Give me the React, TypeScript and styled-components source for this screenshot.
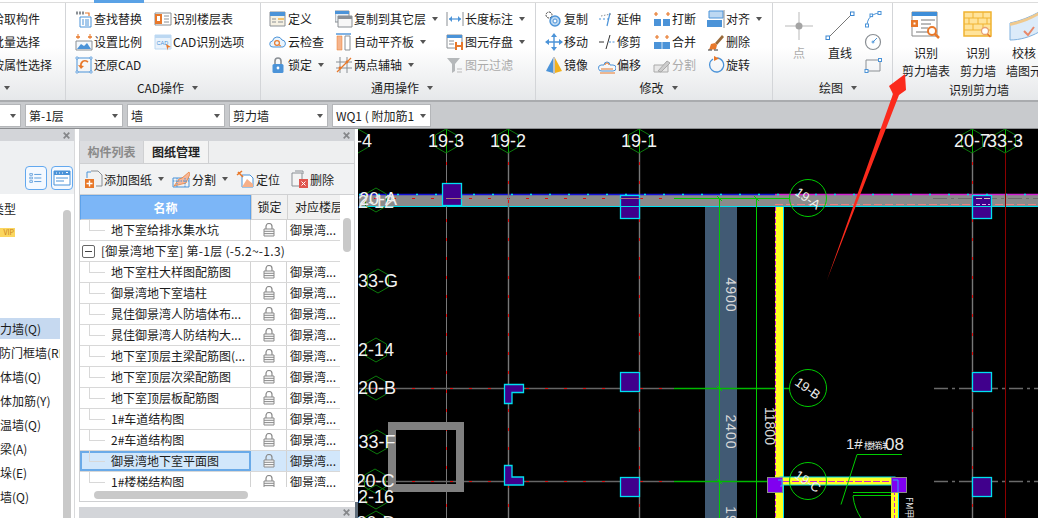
import React from "react";
import styled, { createGlobalStyle } from "styled-components";

const Global = createGlobalStyle`
  html, body { margin: 0; padding: 0; background: #fff; }
  body { font-family: "Noto Sans CJK SC", "Liberation Sans", sans-serif; font-size: 12px; color: #1c1c1c; }
  * { box-sizing: border-box; }
`;

const Page = styled.div`
  position: relative; width: 1038px; height: 518px; overflow: hidden;
  display: flex; flex-direction: column; background: #fff;
`;
const TopStrip = styled.div`height: 3px; flex: none; background: #fff; border-bottom: 1px solid #dcdcdc; display: flex;`;
const ActiveTab = styled.div`margin-left: 94px; width: 50px; height: 3px; background: #5aa2e6;`;
const Ribbon = styled.div`
  height: 99px; flex: none; display: flex; overflow: hidden;
  background: linear-gradient(#ffffff 45%, #e6e8ea); border-bottom: 2px solid #a9abae;
`;
const Group = styled.div<{ $w: number; $pad?: number; $last?: boolean }>`
  width: ${p => p.$w}px; flex: none; padding-left: ${p => p.$pad ?? 0}px; display: flex; flex-direction: column;
  border-right: ${p => (p.$last ? "none" : "1px solid #d3d5d8")};
`;
const Body = styled.div<{ $h?: number }>`display: flex; height: ${p => p.$h ?? 76}px; padding-top: 4px; flex: none;`;
const Col = styled.div<{ $w: number; $ml?: number }>`
  width: ${p => p.$w}px; margin-left: ${p => p.$ml ?? 0}px; flex: none; display: flex; flex-direction: column;
`;
const Tool = styled.div<{ $off?: boolean }>`
  height: 23px; flex: none; display: flex; align-items: center; white-space: nowrap; color: ${p => (p.$off ? "#ababab" : "#1c1c1c")};
  line-height: 23px;
`;
const Slot = styled.span`width: 19px; flex: none; display: flex;`;
const Drop = styled.i<{ $ml?: number }>`
  display: inline-block; width: 0; height: 0; flex: none; margin-left: ${p => p.$ml ?? 6}px;
  border-left: 3px solid transparent; border-right: 3px solid transparent; border-top: 4px solid #555;
`;
const Caption = styled.div<{ $start?: boolean }>`
  height: 18px; flex: none; display: flex; align-items: center; justify-content: ${p => (p.$start ? "flex-start" : "center")};
  padding-left: ${p => (p.$start ? 4 : 0)}px; color: #1c1c1c; line-height: 18px; white-space: nowrap;
`;
const ClippedCol = styled(Col)`margin-left: -8px;`;
const BigCol = styled.div<{ $w: number; $ml?: number }>`
  width: ${p => p.$w}px; margin-left: ${p => p.$ml ?? 0}px; flex: none; display: flex; flex-direction: column; align-items: center;
`;
const BigIcon = styled.div`height: 37px; flex: none; width: 100%; display: flex; justify-content: center; align-items: flex-start; padding-top: 4px;`;
const BigLabel = styled.div<{ $off?: boolean }>`
  line-height: 18px; height: 18px; flex: none; white-space: nowrap; text-align: center; color: ${p => (p.$off ? "#ababab" : "#1c1c1c")};
`;

const Bar = styled.div`height: 27px; flex: none; background: #c8cacd; display: flex; gap: 4px; padding-top: 2px; border-bottom: 1px solid #8b8d90;`;
const Select = styled.div<{ $w: number; $ml?: number }>`
  width: ${p => p.$w}px; margin-left: ${p => p.$ml ?? 0}px; height: 23px; background: #fff; border: 1px solid #b4b6b9;
  display: flex; align-items: center; justify-content: space-between; padding: 0 4px 0 3px; white-space: nowrap; flex: none;
`;

const Main = styled.div`flex: 1; min-height: 0; display: flex; background: #fff;`;
const LeftPanel = styled.div`width: 75px; flex: none; display: flex; flex-direction: column; border-right: 1px solid #d8d9db;`;
const PanelHead = styled.div`
  height: 12px; flex: none; background: #d3d5d9; display: flex; align-items: center; justify-content: flex-end; padding-right: 4px;
`;
const Close = styled.svg`width: 7px; height: 7px; display: block;`;
const LeftTools = styled.div`
  height: 53px; flex: none; background: #eef0f2; display: flex; justify-content: flex-end; align-items: flex-end; gap: 4px; padding: 0 1px 4px 0;
`;
const IconBtn = styled.div`
  width: 22px; height: 24px; border: 1px solid #62a8ef; border-radius: 4px; background: #f4f9ff; display: flex; align-items: center; justify-content: center;
`;
const LeftBody = styled.div`flex: 1; min-height: 0; display: flex; overflow: hidden;`;
const ListCol = styled.div`width: 60px; flex: none; overflow: hidden; padding-top: 6px;`;
const TypeTitle = styled.div`margin-left: -32px; height: 18px; line-height: 18px; white-space: nowrap; font-size: 12px;`;
const Chip = styled.div`
  width: 15px; height: 9px; margin: 10px 0 81px; background: #fbd65f; color: #c9821c; font-size: 7px; line-height: 9px; text-align: right; padding-right: 1px; overflow: hidden;
`;
const ListRow = styled.div<{ $on?: boolean; $cut: number }>`
  height: 21px; margin-bottom: 3px; line-height: 21px; white-space: nowrap; overflow: hidden;
  background: ${p => (p.$on ? "#c6d9f0" : "transparent")};
  & > span { display: block; margin-left: -${p => p.$cut}px; }
`;
const VScroll = styled.div`width: 8px; margin: 16px 0 0 3px; flex: none; background: #c9c9c9; border-radius: 4px 4px 0 0;`;

const Column = styled.div`width: 3px; flex: none; display: flex; flex-direction: column; justify-content: flex-end;`;
const ColumnFoot = styled.div`height: 16px; background: #5d6c7a;`;
const Gutter = styled.div`width: 4px; flex: none;`;

const CenterCol = styled.div`width: 276px; flex: none; display: flex; flex-direction: column;`;
const CenterPanel = styled.div`height: 373px; flex: none; border: 1px solid #cfd0d2; border-top: none; display: flex; flex-direction: column;`;
const CenterHead = styled(PanelHead)`margin: 0 -1px; padding-right: 5px;`;
const Tabs = styled.div`height: 23px; flex: none; display: flex; background: #eeeff0; border-bottom: 1px solid #cfd0d2;`;
const Tab = styled.div<{ $on?: boolean }>`
  width: ${p => (p.$on ? 65 : 64)}px; font-weight: 700; text-align: center; line-height: 22px;
  color: ${p => (p.$on ? "#222" : "#8a8a8a")}; background: ${p => (p.$on ? "#f3f3f3" : "#dcdde0")};
  border-right: 1px solid #cfd0d2;
`;
const DocTools = styled.div`
  height: 31px; flex: none; background: #f1f2f3; border-bottom: 1px solid #cfd0d2; display: flex; align-items: center; padding-left: 5px;
`;
const DocTool = styled.div<{ $ml?: number; $slot: number }>`
  display: flex; align-items: center; margin-left: ${p => p.$ml ?? 0}px; white-space: nowrap;
  & > svg { margin-right: ${p => p.$slot}px; }
`;
const TableArea = styled.div`height: 292px; flex: none; display: flex;`;
const Table = styled.div`width: 260px; flex: none; overflow: hidden;`;
const HeadRow = styled.div`display: grid; grid-template-columns: 171px 36px 53px; height: 25px;`;
const HeadCell = styled.div<{ $main?: boolean; $pad?: number }>`
  line-height: 24px; text-align: ${p => (p.$pad ? "left" : "center")}; padding-left: ${p => p.$pad ?? 0}px; white-space: nowrap; overflow: hidden;
  background: ${p => (p.$main ? "#7cb6f7" : "#f1f1f1")}; color: ${p => (p.$main ? "#fff" : "#222")};
  font-weight: ${p => (p.$main ? 700 : 400)}; border: ${p => (p.$main ? "1px solid #5ea2ea" : "none")};
  border-left: ${p => (p.$main ? "1px solid #5ea2ea" : "1px solid #d2d2d2")}; border-bottom: 1px solid #d2d2d2;
`;
const Row = styled.div<{ $sel?: boolean }>`
  display: grid; grid-template-columns: 171px 36px 53px; height: 21px; border-bottom: 1px solid #d8d8d8;
  background: ${p => (p.$sel ? "#d2e7fb" : "#fff")};
`;
const NameCell = styled.div<{ $sel?: boolean }>`
  position: relative; padding-left: 31px; line-height: 20px; white-space: nowrap; overflow: hidden;
  border-right: 1px solid #d2d2d2; outline: ${p => (p.$sel ? "2px solid #6aaae8" : "none")}; outline-offset: -2px;
`;
const TreeLine = styled.i`
  position: absolute; left: 9px; top: 0; width: 16px; height: 11px; border-left: 1px solid #d8d8d8; border-bottom: 1px solid #d8d8d8;
`;
const LockCell = styled.div`display: flex; align-items: center; justify-content: center; border-right: 1px solid #d2d2d2;`;
const FloorCell = styled.div`padding-left: 3px; line-height: 20px; white-space: nowrap; overflow: hidden;`;
const GroupRow = styled.div`height: 21px; display: flex; align-items: center; padding-left: 2px; border-bottom: 1px solid #d8d8d8; white-space: nowrap; line-height: 20px; letter-spacing: .3px;`;
const Minus = styled.div`
  width: 13px; height: 13px; border: 1px solid #666; border-radius: 2px; margin-right: 6px; display: flex; align-items: center; justify-content: center;
  &::after { content: ""; width: 7px; height: 1px; background: #444; }
`;
const ScrollCol = styled.div`width: 14px; flex: none; padding: 23px 0 0 3px;`;
const VThumb = styled.div`width: 8px; height: 34px; background: #c9c9c9; border-radius: 4px;`;
const HScroll = styled.div`height: 15px; flex: none; padding: 4px 0 0 14px;`;
const HThumb = styled.div`width: 154px; height: 8px; background: #c9c9c9; border-radius: 4px;`;
const SecondHead = styled.div`
  margin-top: 5px; flex: 1; background: #d3d5d9; display: flex; align-items: center; justify-content: flex-end; padding-right: 5px;
`;

const Canvas = styled.svg`width: 680px; height: 389px; flex: none; display: block; background: #000;`;
const ArrowOverlay = styled.svg`position: absolute; left: 0; top: 0; width: 1038px; height: 518px; pointer-events: none;`;

/* ---------- icons ---------- */
const I: React.FC<{ s?: number; children: React.ReactNode }> = ({ s = 18, children }) => (
  <svg width={s} height={s} viewBox="0 0 18 18" fill="none" style={{ display: "block", flex: "none" }}>{children}</svg>
);
const B = "#4b93d8", O = "#e8782a", G = "#8a8f94", LB = "#bcd8f2";

const icons: Record<string, React.ReactNode> = {
  find: <I><path d="M1 3h8" stroke={G} strokeWidth="3" strokeDasharray="2 1" /><path d="M10 3h4v3" stroke={O} strokeWidth="1.2" /><path d="M5 7h11v10H5z" fill="#fff" stroke={B} /><path d="M7 10h2M7 12h2M7 14h2M11 9v7M13 9v7" stroke={B} /></I>,
  scale: <I><path d="M1 4h4M13 4h4" stroke={O} strokeWidth="1.4" /><path d="M3 1v5M15 1v5" stroke={O} /><path d="M1 8h16v9H1z" fill="#f4f8fc" stroke={G} /><path d="M2 16l4-5 3 2 3-3 4 6z" fill={B} /></I>,
  restore: <I><path d="M2 2h14v14H2z" stroke={B} /><path d="M1 1h2v2H1zM15 1h2v2h-2zM1 15h2v2H1zM15 15h2v2h-2z" fill="#fff" stroke={B} strokeWidth=".7" /><path d="M13 6c-4-3-8 0-7 5" stroke={O} strokeWidth="1.6" /><path d="M3 9l3 4 3-3z" fill={O} /></I>,
  layer: <I><path d="M1 3h16v12H1z" fill="#fff" stroke={G} /><path d="M1 4h7v10H1z" fill={O} /><path d="M3 6h3v5H3z" fill="#fff" /><path d="M10 6h5M10 9h5M10 12h5" stroke={G} /></I>,
  cad: <I><path d="M1 2h16v14H1z" fill="#e9f2fb" stroke={LB} /><path d="M1 2h16v3H1z" fill={LB} /><text x="2.5" y="12" fontSize="5.5" fill={B} fontFamily="Liberation Sans">CAD</text><path d="M12 11l5 3-3 .5-.5 3z" fill={O} /></I>,
  define: <I><path d="M1 2h15v14H1z" fill="#f6f1e2" stroke={G} /><path d="M1 2h15v4H1z" fill={B} /><path d="M9 8h6v2H9z" fill="#f5c26b" /><path d="M3 9h4M3 12h4M9 12h5" stroke={G} /></I>,
  cloud: <I><path d="M4 14a3 3 0 0 1-.5-6 5 5 0 0 1 9.5-1 3.6 3.6 0 0 1 1 7z" fill="#eaf4fc" stroke={B} /><circle cx="8" cy="10" r="2.4" stroke={O} strokeWidth="1.2" /><path d="M10 12l2 1" stroke={O} /></I>,
  lock: <I><path d="M6 8V5a3 3 0 0 1 6 0v3" stroke={G} strokeWidth="1.6" /><rect x="3.5" y="8" width="11" height="9" rx="1.5" fill={B} /><circle cx="9" cy="12" r="1.4" fill="#fff" /></I>,
  copyLayer: <I><path d="M0 1h14v11H0z" fill="#e8edf2" stroke={G} /><path d="M0 1h14v3H0z" fill={B} /><path d="M3 6h14v11H3z" fill="#f7f7f7" stroke={G} /><path d="M3 6h14v3H3z" fill="#8b9096" /></I>,
  autoAlign: <I><path d="M1 1h15" stroke={B} strokeWidth="1.4" /><path d="M2 3h5v14H2z" fill="#f5b48c" stroke={O} strokeWidth=".5" /><path d="M10 3h5v14h-5z" fill="#fff" stroke={G} /></I>,
  twoPoint: <I><path d="M5 1v16M12 1v16M1 6h16M1 12h16" stroke={G} /><path d="M2 16L16 2" stroke={O} strokeWidth="1.2" /><circle cx="5" cy="12" r="1.4" fill={O} /><circle cx="12" cy="6" r="1.4" fill={O} /></I>,
  dim: <I><path d="M1 2v14M17 2v14" stroke={G} /><path d="M3 9h12" stroke={B} strokeWidth="1.2" /><path d="M3 9l3-3v6zM15 9l-3-3v6z" fill={B} /></I>,
  save: <I><path d="M1 2h15v13H1z" fill="#fff" stroke={G} /><path d="M1 2h15v3H1z" fill={B} /><path d="M3 8h5M3 11h5" stroke={G} /><path d="M9 9h8v8H9z" fill={O} /><path d="M11 9h4v3h-4zM11 14h4v3h-4z" fill="#fff" /></I>,
  filter: <I><path d="M1 2h13L9 8v7l-3 2V8z" fill="#b5b8ba" /><path d="M11 13h5M11 16h5" stroke="#bbb" /></I>,
  copy: <I><rect x="1" y="2" width="6" height="6" rx="3" stroke="#444" strokeDasharray="2 1" /><circle cx="10" cy="11" r="5" fill={LB} stroke={B} strokeWidth="1.4" /><circle cx="10" cy="11" r="2" fill="#fff" stroke={B} /></I>,
  move: <I><path d="M9 3v12M3 9h12" stroke={B} strokeWidth="1.4" /><path d="M9 0l3 4H6zM9 18l3-4H6zM0 9l4-3v6zM18 9l-4-3v6z" fill={B} /></I>,
  mirror: <I><path d="M8 2v15L1 15z" fill={B} /><path d="M9 1v17" stroke={G} /><path d="M10 2v15l7-2z" fill="#f2b11d" /></I>,
  extend: <I><path d="M1 9h2M5 9h2M9 9h2" stroke={B} /><path d="M12 3L9 16" stroke={B} strokeWidth="1.2" /><path d="M3 6l10-2" stroke={G} strokeDasharray="1.5 1.5" /></I>,
  trim: <I><path d="M1 9h5" stroke="#333" /><path d="M8 16l4-14" stroke="#333" /><path d="M11 9h6" stroke={B} strokeDasharray="2 1.5" /></I>,
  offset: <I><path d="M4 15a3 3 0 0 1-1-6h3a3 3 0 0 1 6 0h3a3 3 0 0 1 0 6z" stroke={B} /><path d="M2 17h15M3 13h12" stroke={O} /><path d="M7 9a2 2 0 0 1 4 0" stroke={O} /></I>,
  brk: <I><path d="M1 4h4M3 2v4M13 4h4M15 2v4" stroke={O} strokeWidth="1.2" /><path d="M1 9h7v7H1zM10 9h7v7h-7z" fill={B} /></I>,
  merge: <I><path d="M2 4h4M4 2v4M12 4h4M14 2v4" stroke={O} strokeWidth="1.2" /><path d="M1 9h16v7H1z" fill={B} /><path d="M9 9v7" stroke="#cfe2f4" /></I>,
  split: <I><path d="M1 9h14v7H1z" fill="#e8e8e8" stroke="#aaa" /><path d="M5 15l9-10 3 2-9 9z" fill="#ccc" stroke="#aaa" /></I>,
  align: <I><path d="M2 1h14v7H2z" fill={LB} stroke={B} /><path d="M0 10h15v7H0z" fill={B} /><path d="M17 0v18" stroke={G} /></I>,
  del: <I><path d="M8 10L15 2l2 2-7 8z" fill="#9a6a3a" /><path d="M4 11l4-1 2 2-1 4c-3 1-6 0-7 1z" fill={O} /><path d="M1 17h4M7 17h4" stroke="#333" /></I>,
  rotate: <I><path d="M6 3a7 7 0 1 0 4-1" stroke={B} strokeWidth="1.3" /><path d="M7 0l5 2.5L7 5z" fill={O} /></I>,
  arc: <I s={18}><path d="M3 16c0-7 4-12 12-13" stroke={B} /><rect x="1.5" y="14" width="3" height="3" fill="#fff" stroke={B} /><rect x="6" y="4" width="2.6" height="2.6" fill="#fff" stroke={B} /><rect x="14" y="1.5" width="3" height="3" fill="#fff" stroke={B} /></I>,
  circle: <I s={18}><circle cx="9" cy="9" r="7.5" stroke={G} strokeWidth="1.2" /><circle cx="9" cy="9" r="1" stroke={B} /><path d="M9 9l4-4" stroke={B} /></I>,
  rect: <I s={18}><path d="M2 4h14v11H2z" stroke={G} /><rect x="1" y="13.5" width="3" height="3" fill="#fff" stroke={B} /><rect x="14.5" y="2.5" width="3" height="3" fill="#fff" stroke={B} /></I>,
  add: <I><path d="M6 1h7l4 4v11H11" stroke={G} /><path d="M2 8V2h4" stroke={B} /><path d="M0 9h9v9H0z" fill={O} /><path d="M4.5 10.5v6M1.5 13.5h6" stroke="#fff" strokeWidth="1.4" /></I>,
  docSplit: <I><path d="M1 8h16v9H1z" stroke={B} /><path d="M2 16l5-7 3-1 7-6 1 2-4 9z" fill="#f6b79a" stroke={O} strokeWidth=".7" /><path d="M1 11h16M5 8v9M13 8v9" stroke={B} strokeDasharray="1.5 1" /></I>,
  locate: <I><path d="M6 5h8l3 3v9H6z" fill="#fff" stroke={B} /><path d="M6 17l5-8 6 5v3z" fill="#f6b08a" /><path d="M2 2l5 5M1 5l5-4" stroke={O} strokeWidth="1.6" /></I>,
  docDel: <I><path d="M4 1h8v3" stroke={G} /><path d="M1 3h10v13H1z" fill="#f4f4f4" stroke={G} /><path d="M8 9h9v9H8z" fill="#e0564f" /><path d="M10.5 11.5l4 4M14.5 11.5l-4 4" stroke="#fff" /></I>,
  listA: <I s={16}><path d="M2 4h3v2H2zM2 8h3v2H2zM2 12h3v2H2z" stroke={B} strokeWidth=".8" /><path d="M7 5h8M7 9h8M7 13h8" stroke={B} /></I>,
  listB: <I s={18}><path d="M1 2h16v14H1z" stroke={B} fill="#fff" /><path d="M1 2h16v4H1z" fill={B} /><path d="M3 4h1M6 4h1M9 4h1M13 3.5h2" stroke="#fff" /><path d="M3 9h12M3 12h8" stroke={B} /></I>,
};

const LockGlyph = () => (
  <svg width="12" height="14" viewBox="0 0 12 14" fill="none" style={{ display: "block" }}>
    <path d="M3 6V3.5a3 3 0 0 1 6 0V6" stroke="#8a8a8a" strokeWidth="1.2" />
    <path d="M1 6h10v7H1z" fill="#fafafa" stroke="#8a8a8a" />
    <path d="M1 8.3h10M1 10.6h10" stroke="#8a8a8a" />
  </svg>
);
const CloseGlyph = () => (
  <Close viewBox="0 0 7 7"><path d="M.7.7l5.6 5.6M6.3.7L.7 6.3" stroke="#85878a" strokeWidth="1.7" /></Close>
);

const T: React.FC<{ i: string; t: string; drop?: boolean; off?: boolean }> = ({ i, t, drop, off }) => (
  <Tool $off={off}><Slot>{icons[i]}</Slot>{t}{drop && <Drop />}</Tool>
);
const CaptionText: React.FC<{ t?: string; start?: boolean }> = ({ t, start }) => (
  <Caption $start={start}>{t}<Drop $ml={t ? 8 : 0} /></Caption>
);

/* ---------- CAD drawing ---------- */
const hex = (cx: number, cy: number) => {
  const rx = 10.5, ry = 12;
  return `${cx},${cy - ry} ${cx + rx},${cy - ry / 2} ${cx + rx},${cy + ry / 2} ${cx},${cy + ry} ${cx - rx},${cy + ry / 2} ${cx - rx},${cy - ry / 2}`;
};
const DG = "#0c7a0c", CY = "#00e0f0", PU = "#40008c", GR = "#00cc00";
const Axis: React.FC<{ x: number; y: number; t?: string; tx?: number }> = ({ x, y, t, tx }) => (
  <g>
    <polygon points={hex(x, y)} stroke={DG} fill="none" />
    {t && <text x={tx ?? x} y={y + 6} textAnchor="middle" fill="#f2f2f2" fontSize="18" fontFamily="Liberation Sans, sans-serif">{t}</text>}
  </g>
);
const VGrid: React.FC<{ x: number; w?: number }> = ({ x, w = 1 }) => (
  <g>
    <line x1={x + 0.5} y1={129} x2={x + 0.5} y2={152} stroke="#00b000" />
    <line x1={x + 0.5} y1={152} x2={x + 0.5} y2={518} stroke="#787878" strokeWidth={w} />
    <line x1={x + 0.5} y1={162} x2={x + 0.5} y2={518} stroke="#e01010" strokeDasharray="3 16" />
  </g>
);
const HGrid: React.FC<{ y: number }> = ({ y }) => (
  <g>
    <line x1={359} y1={y + 0.5} x2={674} y2={y + 0.5} stroke="#666" strokeWidth="1.4" />
    <line x1={374} y1={y + 0.5} x2={674} y2={y + 0.5} stroke="#e01010" strokeDasharray="3 16" />
    <line x1={674} y1={y + 0.5} x2={790} y2={y + 0.5} stroke="#00b800" strokeWidth="1.3" />
    <line x1={934} y1={y + 0.5} x2={1038} y2={y + 0.5} stroke="#6a6a6a" strokeWidth="1.4" strokeDasharray="14 4 3 4" />
  </g>
);
const Col2: React.FC<{ x: number; y: number; w?: number; h?: number }> = ({ x, y, w = 19, h = 19 }) => (
  <rect x={x + 0.5} y={y + 0.5} width={w} height={h} fill={PU} stroke={CY} strokeWidth="1.3" />
);
const Bubble: React.FC<{ y: number; t: string }> = ({ y, t }) => (
  <g>
    <circle cx={808} cy={y} r={18.5} stroke={GR} fill="none" />
    <text x={808} y={y + 5} textAnchor="middle" fill="#eee" fontSize="13" fontFamily="Liberation Sans, sans-serif" transform={`rotate(35 808 ${y})`}>{t}</text>
  </g>
);

const Drawing = () => (
  <Canvas viewBox="358 129 680 389">
    <rect x={705} y={195} width={32} height={323} fill="#415a74" />
    <rect x={359} y={195} width={679} height={11} fill="#8b8b8b" />
    <line x1={359} y1={206.5} x2={1038} y2={206.5} stroke={CY} />
    <line x1={359} y1={194.5} x2={775} y2={194.5} stroke="#1414d8" strokeWidth="1.4" />
    <line x1={775} y1={194.5} x2={1038} y2={194.5} stroke="#d020d0" strokeWidth="1.4" />
    <line x1={359} y1={194.5} x2={1038} y2={194.5} stroke={CY} strokeDasharray="2 17" strokeWidth="1.4" />
    <line x1={374} y1={198.5} x2={674} y2={198.5} stroke="#e01010" strokeDasharray="3 16" />
    <line x1={775} y1={204.5} x2={1038} y2={204.5} stroke="#f08080" strokeDasharray="8 3" />
    <line x1={933} y1={198.5} x2={1038} y2={198.5} stroke="#6e6e6e" strokeDasharray="14 4 3 4" />

    <VGrid x={446} />
    <VGrid x={508} w={1.4} />
    <VGrid x={639} w={1.4} />
    <VGrid x={972} w={1.4} />
    <line x1={1005.5} y1={152} x2={1005.5} y2={518} stroke="#8c0000" />
    <line x1={1005.5} y1={129} x2={1005.5} y2={152} stroke="#00b000" />
    <HGrid y={388} />
    <HGrid y={481} />

    <path d="M392 426h68v62h-68z" fill="none" stroke="#808080" strokeWidth="8" />

    <line x1={719.5} y1={198} x2={719.5} y2={518} stroke={GR} />
    <line x1={756.5} y1={198} x2={756.5} y2={518} stroke={GR} />
    <line x1={674} y1={198.5} x2={790} y2={198.5} stroke={GR} />
    <path d="M717 196l5 5M754 196l5 5M717 386l5 5M717 479l5 5" stroke={GR} />

    <rect x={442.5} y={183.5} width={19} height={22} fill={PU} stroke={CY} strokeWidth="1.3" />
    <Col2 x={620} y={195} w={19} h={23} />
    <Col2 x={972} y={195} w={19} h={23} />
    <Col2 x={620} y={372} />
    <Col2 x={972} y={372} />
    <Col2 x={620} y={477} />
    <Col2 x={972} y={477} />
    <path d="M504.5 384.5h19v8h-11.5v11h-7.5z" fill={PU} stroke={CY} strokeWidth="1.3" />
    <path d="M504.5 465.5h7.5v11.5h11.5v8h-19z" fill={PU} stroke={CY} strokeWidth="1.3" />
    <line x1={446} y1={198.5} x2={462} y2={198.5} stroke="#a87a7a" />
    <line x1={620} y1={198.5} x2={640} y2={198.5} stroke="#a87a7a" />
    <line x1={972} y1={206.5} x2={992} y2={206.5} stroke={CY} />
    <line x1={620} y1={206.5} x2={640} y2={206.5} stroke={CY} />
    <line x1={976} y1={198.5} x2={990} y2={198.5} stroke="#ccb" strokeDasharray="6 2" />
    <line x1={976} y1={204.5} x2={990} y2={204.5} stroke="#f0a0f0" strokeDasharray="4 2" />

    <rect x={775} y={207} width={8} height={311} fill="#ffff20" />
    <line x1={783.5} y1={207} x2={783.5} y2={518} stroke={CY} />
    <line x1={775.5} y1={207} x2={775.5} y2={518} stroke="#d020d0" strokeDasharray="4 2" />
    <rect x={891} y={485} width={7} height={33} fill="#ffff20" />
    <line x1={898.5} y1={485} x2={898.5} y2={518} stroke={CY} />
    <line x1={894.5} y1={485} x2={894.5} y2={518} stroke="#d020d0" strokeDasharray="4 2" />
    <rect x={780} y={477} width={115} height={8} fill="#ffff20" stroke={CY} />
    <line x1={783} y1={481.5} x2={893} y2={481.5} stroke="#d020d0" strokeDasharray="7 2" />
    <rect x={767.5} y={477.5} width={15} height={15} fill="#8000f0" stroke="#8c8c8c" />
    <rect x={891.5} y={477.5} width={15} height={15} fill="#8000f0" stroke="#8c8c8c" />
    <path d="M778 480h4v6h-2" stroke="#2aa8ff" fill="none" />
    <path d="M893 480h5v12" stroke="#2aa8ff" fill="none" />

    <Axis x={358} y={141} t="-4" tx={364} />
    <Axis x={446} y={141} t="19-3" />
    <Axis x={508} y={141} t="19-2" />
    <Axis x={639} y={141} t="19-1" />
    <Axis x={972} y={141} t="20-7" />
    <Axis x={1005} y={141} t="33-3" />
    <Axis x={376} y={200} />
    <text x={378} y={205} textAnchor="middle" fill="#f2f2f2" fontSize="18" fontFamily="Liberation Sans, sans-serif">20-A</text>
    <text x={376} y={208} textAnchor="middle" fill="#e8e8e8" fontSize="18" fontFamily="Liberation Sans, sans-serif">2-12</text>
    <Axis x={378} y={281} t="33-G" />
    <Axis x={376} y={350} t="2-14" />
    <Axis x={376} y={388} t="20-B" tx={377} />
    <Axis x={377} y={442} t="33-F" />
    <Axis x={375} y={481} t="20-C" />
    <Axis x={376} y={497} t="2-16" />
    <Axis x={376} y={523} t="20-D" />

    <Bubble y={198} t="19-A" />
    <Bubble y={388} t="19-B" />
    <Bubble y={481} t="19-C" />

    <text x={726} y={295} fill="#d8d8d8" fontSize="14" letterSpacing="1" textAnchor="middle" fontFamily="Liberation Sans, sans-serif" transform="rotate(90 726 295)">4900</text>
    <text x={726} y={432} fill="#d8d8d8" fontSize="14" letterSpacing="1" textAnchor="middle" fontFamily="Liberation Sans, sans-serif" transform="rotate(90 726 432)">2400</text>
    <text x={726} y={515} fill="#d8d8d8" fontSize="14" letterSpacing="1" textAnchor="middle" fontFamily="Liberation Sans, sans-serif" transform="rotate(90 726 515)">19</text>
    <text x={765} y={426} fill="#d8d8d8" fontSize="14" textAnchor="middle" fontFamily="Liberation Sans, sans-serif" transform="rotate(90 765 426)">11800</text>
    <text x={846} y={449} fill="#e8e8e8" fontSize="15" fontFamily="Liberation Sans, sans-serif">1#</text>
    <text x={864} y={449} fill="#e8e8e8" fontSize="9" fontFamily="Noto Sans CJK SC, sans-serif" letterSpacing="-1.5">楼梯详</text>
    <text x={885} y={450} fill="#e8e8e8" fontSize="17" fontFamily="Liberation Sans, sans-serif">08</text>
    <text x={906} y={497} fill="#e8e8e8" fontSize="9" fontFamily="Noto Sans CJK SC, sans-serif" transform="rotate(90 906 497)">FM甲1</text>
    <path d="M902 454.5h-45l-16 50" stroke={GR} fill="none" />
    <path d="M891 492.5h-38M891 495.5h-38" stroke={GR} fill="none" />
    <path d="M853 496c1 9 4 16 8 22" stroke={GR} fill="none" />
  </Canvas>
);

const names: { t: string; sel?: boolean; group?: boolean }[] = [
  { t: "地下室给排水集水坑" },
  { t: "[御景湾地下室] 第-1层 (-5.2~-1.3)", group: true },
  { t: "地下室柱大样图配筋图" },
  { t: "御景湾地下室墙柱" },
  { t: "晁佳御景湾人防墙体布..." },
  { t: "晁佳御景湾人防结构大..." },
  { t: "地下室顶层主梁配筋图(..." },
  { t: "地下室顶层次梁配筋图" },
  { t: "地下室顶层板配筋图" },
  { t: "1#车道结构图" },
  { t: "2#车道结构图" },
  { t: "御景湾地下室平面图", sel: true },
  { t: "1#楼梯结构图" },
];

const leftItems = [
  { t: "剪力墙(Q)", on: true, cut: 12 },
  { t: "人防门框墙(RFM)", cut: 13 },
  { t: "砌体墙(Q)", cut: 12 },
  { t: "砌体加筋(Y)", cut: 12 },
  { t: "保温墙(Q)", cut: 12 },
  { t: "暗梁(A)", cut: 12 },
  { t: "墙垛(E)", cut: 12 },
  { t: "幕墙(Q)", cut: 12 },
];

export default function App() {
  return (
    <Page>
      <Global />
      <TopStrip><ActiveTab /></TopStrip>
      <Ribbon>
        <Group $w={66}>
          <Body>
            <ClippedCol $w={70}>
              <Tool>拾取构件</Tool>
              <Tool>批量选择</Tool>
              <Tool>按属性选择</Tool>
            </ClippedCol>
          </Body>
          <CaptionText start />
        </Group>
        <Group $w={195} $pad={9}>
          <Body>
            <Col $w={79}>
              <T i="find" t="查找替换" />
              <T i="scale" t="设置比例" />
              <T i="restore" t="还原CAD" />
            </Col>
            <Col $w={100}>
              <T i="layer" t="识别楼层表" />
              <T i="cad" t="CAD识别选项" />
            </Col>
          </Body>
          <CaptionText t="CAD操作" />
        </Group>
        <Group $w={275} $pad={8}>
          <Body>
            <Col $w={66}>
              <T i="define" t="定义" />
              <T i="cloud" t="云检查" />
              <T i="lock" t="锁定" drop />
            </Col>
            <Col $w={111}>
              <T i="copyLayer" t="复制到其它层" drop />
              <T i="autoAlign" t="自动平齐板" drop />
              <T i="twoPoint" t="两点辅轴" drop />
            </Col>
            <Col $w={85}>
              <T i="dim" t="长度标注" drop />
              <T i="save" t="图元存盘" drop />
              <T i="filter" t="图元过滤" off />
            </Col>
          </Body>
          <CaptionText t="通用操作" />
        </Group>
        <Group $w={237} $pad={9}>
          <Body>
            <Col $w={53}>
              <T i="copy" t="复制" />
              <T i="move" t="移动" />
              <T i="mirror" t="镜像" />
            </Col>
            <Col $w={55}>
              <T i="extend" t="延伸" />
              <T i="trim" t="修剪" />
              <T i="offset" t="偏移" />
            </Col>
            <Col $w={54}>
              <T i="brk" t="打断" />
              <T i="merge" t="合并" />
              <T i="split" t="分割" off />
            </Col>
            <Col $w={60}>
              <T i="align" t="对齐" drop />
              <T i="del" t="删除" />
              <T i="rotate" t="旋转" />
            </Col>
          </Body>
          <CaptionText t="修改" />
        </Group>
        <Group $w={120} $pad={11}>
          <Body>
            <BigCol $w={30}>
              <BigIcon>
                <svg width="30" height="30" viewBox="0 0 30 30" fill="none">
                  <path d="M15 1v28M1 15h28" stroke="#b9b9b9" />
                  <circle cx="15" cy="15" r="3.5" fill="#a4a4a4" />
                </svg>
              </BigIcon>
              <BigLabel $off>点</BigLabel>
            </BigCol>
            <BigCol $w={30} $ml={11}>
              <BigIcon>
                <svg width="30" height="30" viewBox="0 0 30 30" fill="none">
                  <path d="M3 27L27 3" stroke="#777" />
                  <rect x="1" y="25" width="3.5" height="3.5" fill="#fff" stroke="#3b86d0" />
                  <rect x="25.5" y="1" width="3.5" height="3.5" fill="#fff" stroke="#3b86d0" />
                </svg>
              </BigIcon>
              <BigLabel>直线</BigLabel>
            </BigCol>
            <Col $w={18} $ml={9}>
              <Tool>{icons.arc}</Tool>
              <Tool>{icons.circle}</Tool>
              <Tool>{icons.rect}</Tool>
            </Col>
          </Body>
          <CaptionText t="绘图" />
        </Group>
        <Group $w={165} $pad={7} $last>
          <Body $h={78}>
            <BigCol $w={52}>
              <BigIcon>
                <svg width="30" height="30" viewBox="0 0 30 30" fill="none">
                  <path d="M1 1h25v24H1z" fill="#fff" stroke="#888" />
                  <path d="M1 1h25v4H1z" fill="#3f8ed8" />
                  <path d="M10 9h14M10 13h10M10 17h7M5 21h12" stroke="#777" />
                  <path d="M0 9h7v7H0z" fill="#e8782a" /><path d="M2.5 11.5h2v2h-2z" fill="#fff" />
                  <circle cx="21" cy="20" r="4" fill="#fff" stroke="#e8782a" strokeWidth="2" />
                  <path d="M24 23l4 4" stroke="#e8782a" strokeWidth="2.5" />
                </svg>
              </BigIcon>
              <BigLabel>识别</BigLabel>
              <BigLabel>剪力墙表</BigLabel>
            </BigCol>
            <BigCol $w={52}>
              <BigIcon>
                <svg width="30" height="30" viewBox="0 0 30 30" fill="none">
                  <path d="M1 1h27v24H1z" fill="#ffe39a" stroke="#f0b330" strokeWidth="1.5" />
                  <path d="M1 7h27M1 13h27M1 19h27M10 1v6M20 1v6M6 7v6M15 7v6M24 7v6M10 13v6M20 13v6" stroke="#f0b330" />
                  <circle cx="22" cy="20" r="3.5" fill="#fff" stroke="#e8a070" strokeWidth="1.3" />
                  <path d="M24.5 23l3 3" stroke="#e8782a" strokeWidth="1.5" />
                </svg>
              </BigIcon>
              <BigLabel>识别</BigLabel>
              <BigLabel>剪力墙</BigLabel>
            </BigCol>
            <BigCol $w={40}>
              <BigIcon>
                <svg width="32" height="30" viewBox="0 0 32 30" fill="none">
                  <path d="M2 12C12 10 22 6 31 1v20c-9 5-19 8-29 8z" fill="#dcebf9" stroke="#7fb0de" />
                  <path d="M2 12C12 10 22 6 31 1v3C22 9 12 13 2 15z" fill="#f0c98d" />
                  <path d="M16 20l4 4 6-8" stroke="#e8886a" strokeWidth="2" />
                </svg>
              </BigIcon>
              <BigLabel>校核</BigLabel>
              <BigLabel>墙图元</BigLabel>
            </BigCol>
          </Body>
          <Caption>识别剪力墙</Caption>
        </Group>
      </Ribbon>
      <Bar>
        <Select $w={30} $ml={-9}><span /><Drop /></Select>
        <Select $w={98}>第-1层<Drop /></Select>
        <Select $w={98}>墙<Drop /></Select>
        <Select $w={99}>剪力墙<Drop /></Select>
        <Select $w={99}>WQ1 ( 附加筋1<Drop $ml={1} /></Select>
      </Bar>
      <Main>
        <LeftPanel>
          <PanelHead><CloseGlyph /></PanelHead>
          <LeftTools>
            <IconBtn>{icons.listA}</IconBtn>
            <IconBtn>{icons.listB}</IconBtn>
          </LeftTools>
          <LeftBody>
            <ListCol>
              <TypeTitle>构件类型</TypeTitle>
              <Chip>VIP</Chip>
              {leftItems.map(it => (
                <ListRow key={it.t} $on={it.on} $cut={it.cut}>
                  <span>{it.t}</span>
                </ListRow>
              ))}
            </ListCol>
            <VScroll />
          </LeftBody>
        </LeftPanel>
        <Gutter />
        <CenterCol>
          <CenterPanel>
            <CenterHead><CloseGlyph /></CenterHead>
            <Tabs>
              <Tab>构件列表</Tab>
              <Tab $on>图纸管理</Tab>
            </Tabs>
            <DocTools>
              <DocTool $slot={1}>{icons.add}添加图纸<Drop /></DocTool>
              <DocTool $ml={8} $slot={2}>{icons.docSplit}分割<Drop /></DocTool>
              <DocTool $ml={8} $slot={2}>{icons.locate}定位</DocTool>
              <DocTool $ml={11} $slot={1}>{icons.docDel}删除</DocTool>
            </DocTools>
            <TableArea>
              <Table>
                <HeadRow>
                  <HeadCell $main>名称</HeadCell>
                  <HeadCell>锁定</HeadCell>
                  <HeadCell $pad={7}>对应楼层</HeadCell>
                </HeadRow>
                {names.map(r =>
                  r.group ? (
                    <GroupRow key={r.t}><Minus />{r.t}</GroupRow>
                  ) : (
                    <Row key={r.t} $sel={r.sel}>
                      <NameCell $sel={r.sel}><TreeLine />{r.t}</NameCell>
                      <LockCell><LockGlyph /></LockCell>
                      <FloorCell>御景湾...</FloorCell>
                    </Row>
                  )
                )}
              </Table>
              <ScrollCol><VThumb /></ScrollCol>
            </TableArea>
            <HScroll><HThumb /></HScroll>
          </CenterPanel>
          <SecondHead><CloseGlyph /></SecondHead>
        </CenterCol>
        <Column><ColumnFoot /></Column>
        <Drawing />
      </Main>
      <ArrowOverlay viewBox="0 0 1038 518">
        <polygon points="827,280 893,94 889,86 905,74 906,90 899,95" fill="#fb2a1c" />
      </ArrowOverlay>
    </Page>
  );
}
